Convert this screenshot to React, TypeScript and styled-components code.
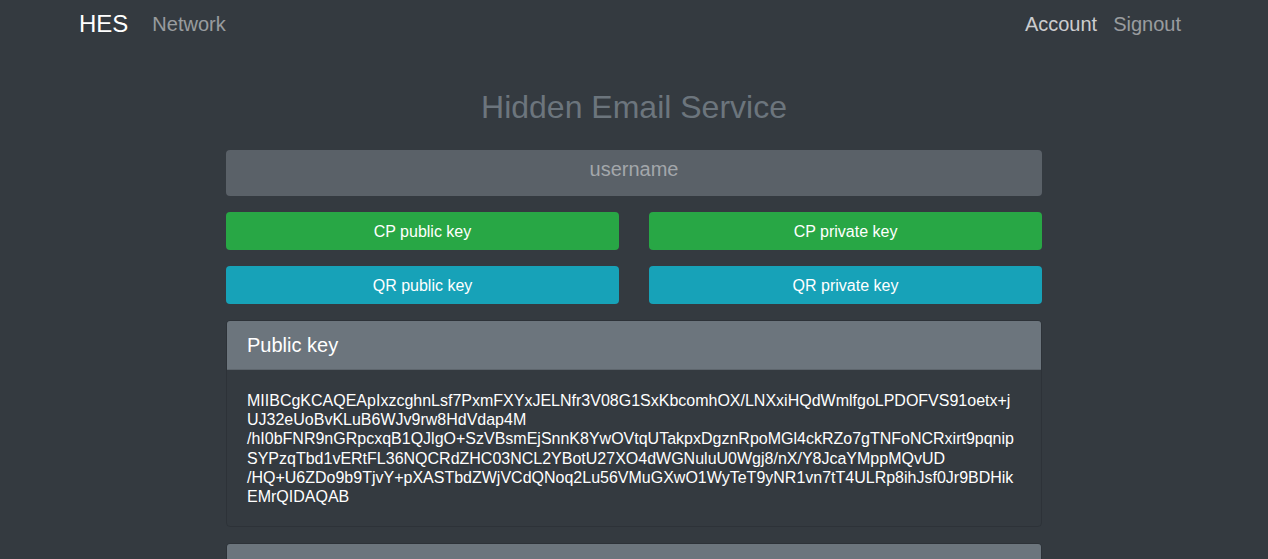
import React from "react";
import styled, { createGlobalStyle } from "styled-components";

const GlobalStyle = createGlobalStyle`
  html, body {
    margin: 0;
    padding: 0;
    background: #343a40;
    font-family: "Liberation Sans", Arial, sans-serif;
    color: #fff;
  }
  * { box-sizing: border-box; }
`;

const Navbar = styled.nav`
  max-width: 1140px;
  margin: 0 auto;
  padding: 0 15px;
  height: 48px;
  display: flex;
  align-items: center;
  justify-content: space-between;
`;

const NavGroup = styled.div`
  display: flex;
  align-items: center;
`;

const Brand = styled.a`
  font-size: 24px;
  line-height: 30px;
  color: #fff;
  text-decoration: none;
  margin-right: 16px;
`;

const NavLink = styled.a<{ $active?: boolean }>`
  font-size: 20px;
  line-height: 30px;
  padding: 0 8px;
  text-decoration: none;
  color: ${(p) => (p.$active ? "rgba(255,255,255,0.75)" : "rgba(255,255,255,0.5)")};
`;

const Main = styled.main`
  width: 816px;
  margin: 0 auto;
  padding-top: 40px;
`;

const Title = styled.h2`
  margin: 0 0 24px;
  font-size: 32px;
  line-height: 38px;
  font-weight: 400;
  text-align: center;
  color: #6c757d;
`;

const UserInput = styled.input`
  display: block;
  width: 100%;
  height: 46px;
  margin: 0 0 16px;
  padding: 4px 16px 12px;
  border: none;
  border-radius: 4px;
  background: #5a6168;
  color: #fff;
  font-family: inherit;
  font-size: 20px;
  line-height: 30px;
  text-align: center;
  outline: none;
  &::placeholder {
    color: #a3a7ab;
  }
`;

const ButtonGrid = styled.div`
  display: grid;
  grid-template-columns: 1fr 1fr;
  column-gap: 30px;
  row-gap: 16px;
  margin-bottom: 16px;
`;

const ActionButton = styled.button<{ $tone: "green" | "teal" }>`
  height: 38px;
  padding: 1px 12px 0;
  border: none;
  border-radius: 4px;
  background: ${(p) => (p.$tone === "green" ? "#28a745" : "#17a2b8")};
  color: #fff;
  font-family: inherit;
  font-size: 16px;
  line-height: 24px;
  cursor: pointer;
`;

const Card = styled.section`
  border: 1px solid rgba(0, 0, 0, 0.125);
  border-radius: 4px;
  margin-bottom: 16px;
  overflow: hidden;
`;

const CardHeader = styled.header`
  background: #6c757d;
  padding: 12px 20px;
  font-size: 20px;
  line-height: 24px;
  color: #fff;
  border-bottom: 1px solid rgba(0, 0, 0, 0.125);
`;

const CardBody = styled.div`
  padding: 21px 20px 20px;
  font-size: 16px;
  line-height: 19.2px;
  color: #fff;
  white-space: pre-line;
  overflow-wrap: anywhere;
`;

const publicKey = [
  "MIIBCgKCAQEApIxzcghnLsf7PxmFXYxJELNfr3V08G1SxKbcomhOX/LNXxiHQdWmlfgoLPDOFVS91oetx+j",
  "UJ32eUoBvKLuB6WJv9rw8HdVdap4M",
  "/hI0bFNR9nGRpcxqB1QJlgO+SzVBsmEjSnnK8YwOVtqUTakpxDgznRpoMGl4ckRZo7gTNFoNCRxirt9pqnip",
  "SYPzqTbd1vERtFL36NQCRdZHC03NCL2YBotU27XO4dWGNuluU0Wgj8/nX/Y8JcaYMppMQvUD",
  "/HQ+U6ZDo9b9TjvY+pXASTbdZWjVCdQNoq2Lu56VMuGXwO1WyTeT9yNR1vn7tT4ULRp8ihJsf0Jr9BDHik",
  "EMrQIDAQAB",
].join("\n");

export default function App() {
  return (
    <>
      <GlobalStyle />
      <Navbar>
        <NavGroup>
          <Brand href="#">HES</Brand>
          <NavLink href="#">Network</NavLink>
        </NavGroup>
        <NavGroup>
          <NavLink href="#" $active>Account</NavLink>
          <NavLink href="#">Signout</NavLink>
        </NavGroup>
      </Navbar>
      <Main>
        <Title>Hidden Email Service</Title>
        <UserInput placeholder="username" />
        <ButtonGrid>
          <ActionButton $tone="green">CP public key</ActionButton>
          <ActionButton $tone="green">CP private key</ActionButton>
          <ActionButton $tone="teal">QR public key</ActionButton>
          <ActionButton $tone="teal">QR private key</ActionButton>
        </ButtonGrid>
        <Card>
          <CardHeader>Public key</CardHeader>
          <CardBody>{publicKey}</CardBody>
        </Card>
        <Card>
          <CardHeader>Private key</CardHeader>
          <CardBody>••••••••••••••••••••••••</CardBody>
        </Card>
      </Main>
    </>
  );
}
